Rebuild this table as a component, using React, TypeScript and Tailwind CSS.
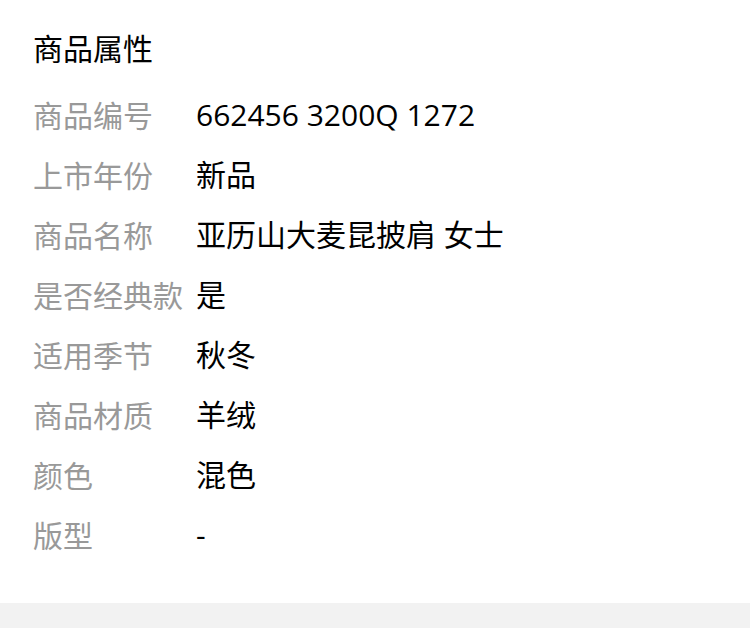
const attrs: { label: string; value: string }[] = [
  { label: "商品编号", value: "662456 3200Q 1272" },
  { label: "上市年份", value: "新品" },
  { label: "商品名称", value: "亚历山大麦昆披肩 女士" },
  { label: "是否经典款", value: "是" },
  { label: "适用季节", value: "秋冬" },
  { label: "商品材质", value: "羊绒" },
  { label: "颜色", value: "混色" },
  { label: "版型", value: "-" },
];

export default function App() {
  return (
    <div className="w-[750px] min-h-[628px] bg-white flex flex-col font-['Noto_Sans_CJK_SC','Noto_Sans',sans-serif]">
      <div className="pt-[17px] pb-[39px] pl-[33px]">
        <h2 className="h-[60px] flex items-center text-[30px] text-black font-normal mb-[7px]">商品属性</h2>
        {attrs.map((a) => (
          <div key={a.label} className="h-[60px] flex items-center text-[30px]">
            <div className="w-[163px] shrink-0 whitespace-nowrap text-[#999999]">{a.label}</div>
            <div className="text-black font-['Open_Sans','Noto_Sans_CJK_SC',sans-serif]">{a.value}</div>
          </div>
        ))}
      </div>
      <div className="flex-1 bg-[#f2f2f2]" />
    </div>
  );
}
